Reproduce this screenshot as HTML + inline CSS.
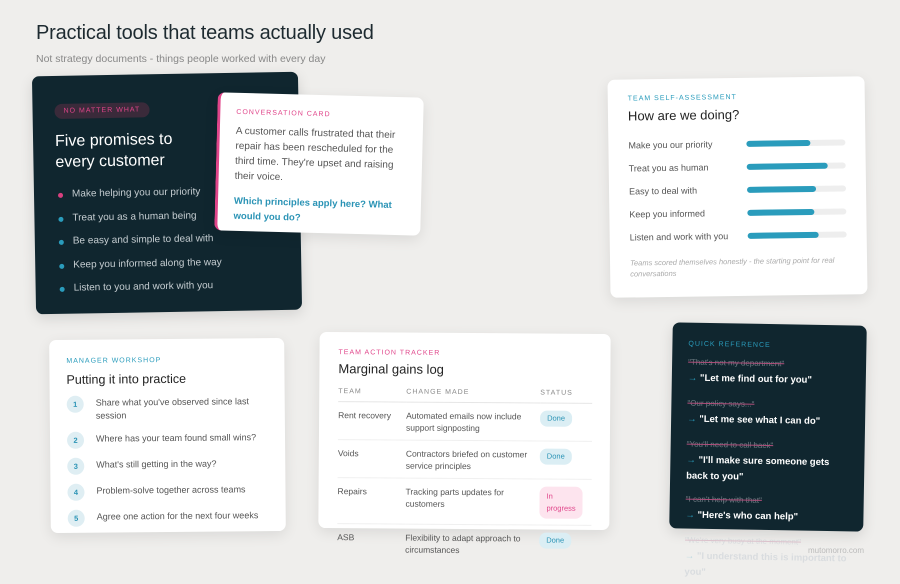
<!DOCTYPE html>
<html><head><meta charset="utf-8"><style>
*{box-sizing:border-box;margin:0;padding:0}
body{width:900px;height:568px;overflow:hidden;background:#efeeec;font-family:"Liberation Sans",sans-serif;position:relative;color:#333}
h1{position:absolute;left:36px;top:22px;font-size:20px;font-weight:normal;color:#1d2a30;letter-spacing:-0.2px}
.sub{position:absolute;left:36px;top:53px;font-size:10.5px;color:#888}
.card{position:absolute;background:#fff;border-radius:7px;box-shadow:0 4px 14px rgba(0,0,0,.09)}
.lab{font-size:7px;letter-spacing:1px;text-transform:uppercase}
.dark{position:absolute;background:#10262f;left:34px;top:74px;width:266px;height:238px;transform:rotate(-1deg);border-radius:7px;padding:24px 22px;box-shadow:0 4px 14px rgba(0,0,0,.12)}
.pill{display:inline-block;background:#3a2a3a;color:#e0458a;font-size:7px;letter-spacing:1px;padding:4px 9px;border-radius:9px}
.dark h2{color:#fff;font-weight:normal;font-size:16px;line-height:21px;margin-top:12px}
.dark ul{list-style:none;margin-top:16px}
.dark li{color:#c4ccd0;font-size:10px;height:23.5px;position:relative;padding-left:16px}
.dark li:before{content:"";position:absolute;left:2px;top:4px;width:5px;height:5px;border-radius:50%;background:#2a9cbc}
.dark li.p:before{background:#d8407f}
.conv{left:216px;top:95px;width:206px;height:138px;transform:rotate(1.5deg);border-left:3px solid #e0458a;padding:16px 16px}
.conv p{font-size:10px;line-height:15px;color:#555;margin-top:8px}
.conv .q{color:#2a93b5;margin-top:10px;font-weight:bold;font-size:9.5px}
.self{left:609px;top:78px;width:257px;height:218px;transform:rotate(-0.8deg);padding:16px 20px}
.self .lab{color:#2a9cbc}
.self h3{font-weight:normal;font-size:13px;color:#222;margin-top:6px}
.row{display:flex;align-items:center;height:23.2px;font-size:9px;color:#555}
.row span{width:118px}
.bar{flex:1;height:6px;background:#eee;border-radius:3px;position:relative}
.bar i{position:absolute;left:0;top:0;height:6px;background:#2a9cbc;border-radius:3px}
.note{font-size:7.5px;color:#aaa;font-style:italic;line-height:11px;margin-top:8px}
.mgr{left:50px;top:339px;width:235px;height:193px;transform:rotate(-0.5deg);padding:18px 17px;overflow:hidden}
.mgr .lab{color:#2a9cbc}
.mgr h3{font-weight:normal;font-size:12.5px;color:#222;margin-top:8px}
.st{display:flex;font-size:9px;color:#555;line-height:13px;margin-top:10px}
.st b{flex:none;width:17px;height:17px;border-radius:50%;background:#dfeef3;color:#2a93b5;font-size:7.5px;display:flex;align-items:center;justify-content:center;margin-right:12px;margin-top:-1px}
.trk{left:319px;top:333px;width:291px;height:196px;transform:rotate(0.4deg);padding:17px 19px}
.trk .lab{color:#e0458a}
.trk h3{font-weight:normal;font-size:13px;color:#222;margin-top:5px}
table{border-collapse:collapse;width:254px;margin-top:12px;font-size:8.5px;color:#555;position:relative;z-index:2}
th{font-weight:normal;font-size:7px;letter-spacing:1px;color:#888;text-align:left;padding-bottom:6px;border-bottom:1px solid #e6e6e6}
td{vertical-align:top;padding:7px 0 6px;border-bottom:1px solid #f0f0f0;line-height:12px}
.tag{display:inline-block;background:#dbeef4;color:#2a93b5;padding:2px 7px;border-radius:7px;font-size:7.5px}
.tag.ip{background:#fde4ee;color:#e0458a;padding:4px 7px}
.qr{position:absolute;background:#10262f;left:671px;top:324px;width:194px;height:206px;transform:rotate(1deg);border-radius:7px;padding:18px 16px;box-shadow:0 4px 14px rgba(0,0,0,.12)}
.qr .lab{color:#2a9cbc}
.qr .o{font-size:8px;color:#6d7b82;text-decoration:line-through;text-decoration-color:#b04e7a;margin-top:10px}
.qr .n{font-size:9.5px;color:#fff;font-weight:bold;margin-top:4px;line-height:16px}
.qr .n em{color:#2a9cbc;font-style:normal}
.fade{opacity:.25}
.wm{position:absolute;left:808px;top:546px;font-size:8px;color:#bbb}
</style></head><body>
<h1>Practical tools that teams actually used</h1>
<div class="sub">Not strategy documents - things people worked with every day</div>

<div class="dark">
<span class="pill">NO MATTER WHAT</span>
<h2>Five promises to<br>every customer</h2>
<ul>
<li class="p">Make helping you our priority</li>
<li>Treat you as a human being</li>
<li>Be easy and simple to deal with</li>
<li>Keep you informed along the way</li>
<li>Listen to you and work with you</li>
</ul>
</div>

<div class="card conv">
<div class="lab" style="color:#e0458a">Conversation card</div>
<p>A customer calls frustrated that their repair has been rescheduled for the third time. They're upset and raising their voice.</p>
<p class="q">Which principles apply here? What would you do?</p>
</div>

<div class="card self">
<div class="lab">Team self-assessment</div>
<h3>How are we doing?</h3>
<div style="margin-top:10px">
<div class="row"><span>Make you our priority</span><div class="bar"><i style="width:65%"></i></div></div>
<div class="row"><span>Treat you as human</span><div class="bar"><i style="width:82%"></i></div></div>
<div class="row"><span>Easy to deal with</span><div class="bar"><i style="width:70%"></i></div></div>
<div class="row"><span>Keep you informed</span><div class="bar"><i style="width:68%"></i></div></div>
<div class="row"><span>Listen and work with you</span><div class="bar"><i style="width:72%"></i></div></div>
</div>
<div class="note">Teams scored themselves honestly - the starting point for real conversations</div>
</div>

<div class="card mgr">
<div class="lab">Manager workshop</div>
<h3>Putting it into practice</h3>
<div style="margin-top:4px">
<div class="st"><b>1</b><span>Share what you've observed since last session</span></div>
<div class="st"><b>2</b><span>Where has your team found small wins?</span></div>
<div class="st"><b>3</b><span>What's still getting in the way?</span></div>
<div class="st"><b>4</b><span>Problem-solve together across teams</span></div>
<div class="st"><b>5</b><span>Agree one action for the next four weeks</span></div>
</div>
</div>

<div class="card trk">
<div class="lab">Team action tracker</div>
<h3>Marginal gains log</h3>
<table>
<tr><th style="width:68px">TEAM</th><th style="width:134px">CHANGE MADE</th><th>STATUS</th></tr>
<tr><td>Rent recovery</td><td>Automated emails now include support signposting</td><td><span class="tag">Done</span></td></tr>
<tr><td>Voids</td><td>Contractors briefed on customer service principles</td><td><span class="tag">Done</span></td></tr>
<tr><td>Repairs</td><td>Tracking parts updates for customers</td><td><span class="tag ip">In<br>progress</span></td></tr>
<tr><td style="border:0">ASB</td><td style="border:0">Flexibility to adapt approach to circumstances</td><td style="border:0"><span class="tag">Done</span></td></tr>
</table>
</div>

<div class="qr">
<div class="lab">Quick reference</div>
<div class="o">"That's not my department"</div>
<div class="n"><em>→</em> "Let me find out for you"</div>
<div class="o" style="margin-top:12px">"Our policy says..."</div>
<div class="n"><em>→</em> "Let me see what I can do"</div>
<div class="o" style="margin-top:12px">"You'll need to call back"</div>
<div class="n"><em>→</em> "I'll make sure someone gets back to you"</div>
<div class="o" style="margin-top:10px">"I can't help with that"</div>
<div class="n"><em>→</em> "Here's who can help"</div>
<div class="fade"><div class="o" style="margin-top:12px;color:#9ab">"We're very busy at the moment"</div>
<div class="n" style="color:#9ab"><em>→</em> "I understand this is important to you"</div></div>
</div>
<div class="wm">mutomorro.com</div>
</body></html>
